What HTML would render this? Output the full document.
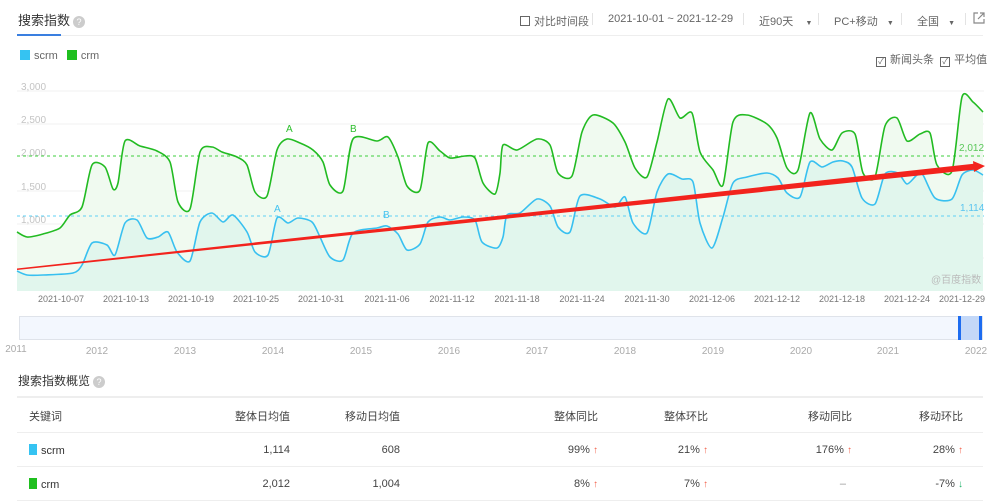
<!DOCTYPE html>
<html><head><meta charset="utf-8"><style>
*{margin:0;padding:0;box-sizing:border-box}
body{width:1000px;height:503px;background:#fff;font-family:"Liberation Sans","Noto Sans CJK SC",sans-serif;color:#333;position:relative;overflow:hidden}
.a{position:absolute;white-space:nowrap}
.g{color:#666;font-size:11px}
.q{display:inline-block;width:12px;height:12px;border-radius:50%;background:#ccc;color:#fff;font-size:9px;text-align:center;line-height:12px;vertical-align:middle;margin-left:3px}
.cb{display:inline-block;width:10px;height:10px;border:1px solid #666;vertical-align:-1px;margin-right:4px;font-size:8px;line-height:8px;text-align:center}
.sep{position:absolute;top:13px;width:1px;height:12px;background:#e3e3e3}
.t{font-size:11px;color:#444}
.r{text-align:right}
.up{color:#f2624b;font-size:10px}
.dn{color:#22b36b;font-size:10px}
</style></head><body>
<div class="a" style="left:18px;top:10px;font-size:13px;color:#333">搜索指数<span class="q">?</span></div>
<div class="a" style="left:17px;top:34px;width:44px;height:2px;background:#3a7fe0"></div>
<div class="a" style="left:61px;top:35px;width:922px;height:1px;background:#eee"></div>
<div class="a g" style="left:520px;top:13px"><span class="cb"></span>对比时间段</div>
<div class="sep" style="left:592px"></div>
<div class="a g" style="left:608px;top:13px">2021-10-01 ~ 2021-12-29</div>
<div class="sep" style="left:743px"></div>
<div class="a g" style="left:759px;top:13px">近90天 &nbsp;&nbsp;&nbsp;<span style="font-size:7px">▼</span></div>
<div class="sep" style="left:818px"></div>
<div class="a g" style="left:834px;top:13px">PC+移动 &nbsp;&nbsp;<span style="font-size:7px">▼</span></div>
<div class="sep" style="left:901px"></div>
<div class="a g" style="left:917px;top:13px">全国 &nbsp;&nbsp;<span style="font-size:7px">▼</span></div>
<div class="sep" style="left:965px"></div>
<svg class="a" style="left:973px;top:12px" width="12" height="12"><path d="M5 1H1V11H11V7M7 1H11V5M11 1L5 7" fill="none" stroke="#888" stroke-width="1.2"/></svg>
<div class="a g" style="left:20px;top:50px"><span style="display:inline-block;width:10px;height:10px;background:#35c3f2;vertical-align:-1px;margin-right:4px"></span>scrm <span style="display:inline-block;width:10px;height:10px;background:#1fbf1f;vertical-align:-1px;margin:0 4px 0 6px"></span>crm</div>
<div class="a g" style="left:876px;top:51px"><span class="cb">✓</span>新闻头条&nbsp;&nbsp;<span class="cb">✓</span>平均值</div>
<svg class="a" style="left:0;top:0" width="1000" height="310">
<g stroke="#f0f0f0" stroke-width="1"><line x1="17" x2="984" y1="91" y2="91"/><line x1="17" x2="984" y1="124" y2="124"/><line x1="17" x2="984" y1="191" y2="191"/><line x1="17" x2="984" y1="224" y2="224"/><line x1="17" x2="984" y1="258" y2="258"/></g>
<g font-size="10" fill="#c4c4c4" font-family="Liberation Sans"><text x="21" y="90">3,000</text><text x="21" y="123">2,500</text><text x="21" y="156">2,000</text><text x="21" y="190">1,500</text><text x="21" y="223">1,000</text><text x="21" y="257">500</text></g>
<path id="gf" fill="#f0faf0"/>
<path id="bf" fill="#e1f6ed"/>
<line x1="17" x2="984" y1="156" y2="156" stroke="#3ccf3c" stroke-dasharray="3,3"/>
<line x1="17" x2="984" y1="216" y2="216" stroke="#5fd0f5" stroke-dasharray="3,3"/>
<path id="gl" fill="none" stroke="#22bb22" stroke-width="1.6"/>
<path id="bl" fill="none" stroke="#38c0f0" stroke-width="1.6"/>
<polygon fill="#f2231d" points="17,268.5 17,270 976,169.5 976,163.5"/>
<polygon fill="#f2231d" points="973,161 985,166 974,172"/>
<g font-size="10" font-family="Liberation Sans"><text x="286" y="132" fill="#2cbf2c">A</text><text x="350" y="132" fill="#2cbf2c">B</text><text x="274" y="212" fill="#45c3f0">A</text><text x="383" y="218" fill="#45c3f0">B</text><text x="959" y="151" fill="#5bc75b">2,012</text><text x="960" y="211" fill="#59c4f0">1,114</text><text x="931" y="283" fill="#bbb">@百度指数</text></g>
<g font-size="9" fill="#777" font-family="Liberation Sans" text-anchor="middle"><text x="61" y="302">2021-10-07</text><text x="126" y="302">2021-10-13</text><text x="191" y="302">2021-10-19</text><text x="256" y="302">2021-10-25</text><text x="321" y="302">2021-10-31</text><text x="387" y="302">2021-11-06</text><text x="452" y="302">2021-11-12</text><text x="517" y="302">2021-11-18</text><text x="582" y="302">2021-11-24</text><text x="647" y="302">2021-11-30</text><text x="712" y="302">2021-12-06</text><text x="777" y="302">2021-12-12</text><text x="842" y="302">2021-12-18</text><text x="907" y="302">2021-12-24</text><text x="962" y="302">2021-12-29</text></g>
</svg>
<div class="a" style="left:19px;top:316px;width:964px;height:24px;background:#f3f7fe;border:1px solid #dfe3ea"></div>
<div class="a" style="left:959px;top:316px;width:23px;height:24px;background:#c3d8f8"></div>
<div class="a" style="left:958px;top:316px;width:3px;height:24px;background:#1d6cf0"></div>
<div class="a" style="left:979px;top:316px;width:3px;height:24px;background:#1d6cf0"></div>
<svg class="a" style="left:0;top:342px" width="1000" height="16"><g font-size="10" fill="#aaa" font-family="Liberation Sans" text-anchor="middle"><text x="16" y="10">2011</text><text x="97" y="12">2012</text><text x="185" y="12">2013</text><text x="273" y="12">2014</text><text x="361" y="12">2015</text><text x="449" y="12">2016</text><text x="537" y="12">2017</text><text x="625" y="12">2018</text><text x="713" y="12">2019</text><text x="801" y="12">2020</text><text x="888" y="12">2021</text><text x="976" y="12">2022</text></g></svg>
<div class="a" style="left:18px;top:372px;font-size:12px;color:#333">搜索指数概览<span class="q">?</span></div>
<div class="a" style="left:17px;top:396px;width:966px;height:2px;background:#eee"></div>
<div class="a" style="left:17px;top:432px;width:966px;height:1px;background:#eee"></div>
<div class="a" style="left:17px;top:466px;width:966px;height:1px;background:#eee"></div>
<div class="a" style="left:17px;top:500px;width:966px;height:1px;background:#eee"></div>
<div class="a t" style="left:29px;top:408px">关键词</div>
<div class="a t r" style="left:190px;top:408px;width:100px">整体日均值</div>
<div class="a t r" style="left:300px;top:408px;width:100px">移动日均值</div>
<div class="a t r" style="left:498px;top:408px;width:100px">整体同比</div>
<div class="a t r" style="left:608px;top:408px;width:100px">整体环比</div>
<div class="a t r" style="left:752px;top:408px;width:100px">移动同比</div>
<div class="a t r" style="left:863px;top:408px;width:100px">移动环比</div>
<div class="a" style="left:29px;top:444px;font-size:11px;color:#333"><span style="display:inline-block;width:8px;height:11px;background:#35c3f2;vertical-align:-1px;margin-right:4px"></span>scrm</div>
<div class="a t r" style="left:190px;top:444px;width:100px">1,114</div>
<div class="a t r" style="left:300px;top:444px;width:100px">608</div>
<div class="a t r" style="left:492px;top:444px;width:106px">99% <span class="up">↑</span></div>
<div class="a t r" style="left:602px;top:444px;width:106px">21% <span class="up">↑</span></div>
<div class="a t r" style="left:746px;top:444px;width:106px">176% <span class="up">↑</span></div>
<div class="a t r" style="left:857px;top:444px;width:106px">28% <span class="up">↑</span></div>
<div class="a" style="left:29px;top:478px;font-size:11px;color:#333"><span style="display:inline-block;width:8px;height:11px;background:#1fbf1f;vertical-align:-1px;margin-right:4px"></span>crm</div>
<div class="a t r" style="left:190px;top:478px;width:100px">2,012</div>
<div class="a t r" style="left:300px;top:478px;width:100px">1,004</div>
<div class="a t r" style="left:492px;top:478px;width:106px">8% <span class="up">↑</span></div>
<div class="a t r" style="left:602px;top:478px;width:106px">7% <span class="up">↑</span></div>
<div class="a t r" style="left:746px;top:478px;width:100px;color:#999">–</div>
<div class="a t r" style="left:857px;top:478px;width:106px">-7% <span class="dn">↓</span></div>
<script>
var G="17,232 27,237 43,234 60,228 70,215 82,207 92,165 105,167 113,189 118,183 125,141 140,146 157,151 170,162 178,202 190,209 200,152 212,147 222,152 237,157 247,165 255,192 267,196 277,150 287,139 300,143 313,150 323,162 330,185 343,191 353,139 377,141 388,137 398,157 407,186 420,190 428,143 440,151 450,158 465,156 475,158 483,183 495,194 500,173 503,145 517,150 537,139 550,145 558,173 572,176 582,132 593,115 613,123 625,142 635,168 647,177 657,142 668,99 680,118 692,113 700,152 713,170 723,185 733,122 747,115 767,124 777,138 787,168 798,170 810,113 820,139 832,150 842,133 855,134 863,173 875,177 885,126 897,118 907,141 920,134 930,133 937,165 952,171 962,97 973,102 983,112";
var B="17,271 27,275 43,275 73,273 82,265 92,243 107,245 115,255 125,223 137,220 147,238 158,237 168,232 177,252 190,261 200,222 212,213 223,222 233,215 247,232 255,252 268,255 277,218 288,223 298,218 312,222 320,237 330,257 343,260 353,233 377,228 387,226 398,234 407,250 420,244 428,222 440,217 450,220 463,217 475,220 482,242 497,248 503,237 507,215 520,213 537,199 550,206 558,227 570,232 580,196 600,199 615,207 625,197 633,223 647,233 657,192 668,174 682,179 693,182 700,223 712,248 723,217 733,183 747,177 767,173 778,178 787,193 800,197 810,162 822,167 833,162 843,161 852,167 862,198 875,204 885,174 898,173 907,184 917,175 923,175 935,198 952,199 962,175 973,170 983,175";
function pts(s){return s.split(' ').map(function(p){return p.split(',').map(Number)})}
function smooth(p){var d='M'+p[0][0]+','+p[0][1];for(var i=0;i<p.length-1;i++){var p0=p[i-1]||p[i],p1=p[i],p2=p[i+1],p3=p[i+2]||p2;var t=0.13;var c1x=p1[0]+(p2[0]-p0[0])*t,c1y=p1[1]+(p2[1]-p0[1])*t,c2x=p2[0]-(p3[0]-p1[0])*t,c2y=p2[1]-(p3[1]-p1[1])*t;d+=' C'+c1x.toFixed(1)+','+c1y.toFixed(1)+' '+c2x.toFixed(1)+','+c2y.toFixed(1)+' '+p2[0]+','+p2[1];}return d}
var g=smooth(pts(G)),b=smooth(pts(B));
document.getElementById('gl').setAttribute('d',g);
document.getElementById('bl').setAttribute('d',b);
document.getElementById('gf').setAttribute('d',g+' L983,291 L17,291 Z');
document.getElementById('bf').setAttribute('d',b+' L983,291 L17,291 Z');
</script>
</body></html>
